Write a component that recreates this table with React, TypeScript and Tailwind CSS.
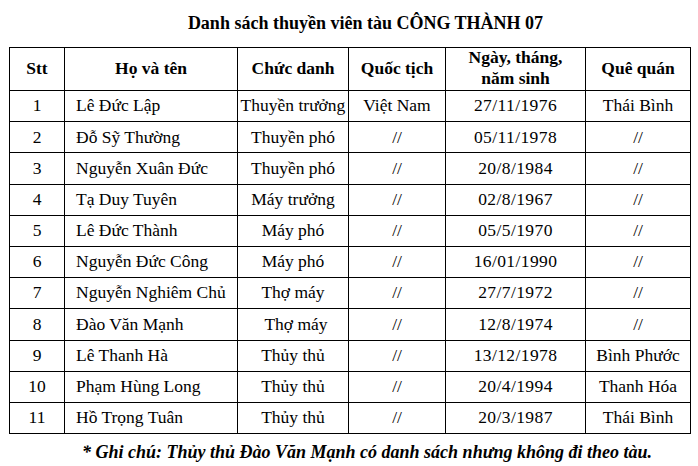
const rows = [
  { stt: 1, name: "Lê Đức Lập", role: "Thuyền trưởng", nation: "Việt Nam", dob: "27/11/1976", home: "Thái Bình" },
  { stt: 2, name: "Đỗ Sỹ Thường", role: "Thuyền phó", nation: "//", dob: "05/11/1978", home: "//" },
  { stt: 3, name: "Nguyễn Xuân Đức", role: "Thuyền phó", nation: "//", dob: "20/8/1984", home: "//" },
  { stt: 4, name: "Tạ Duy Tuyên", role: "Máy trưởng", nation: "//", dob: "02/8/1967", home: "//" },
  { stt: 5, name: "Lê Đức Thành", role: "Máy phó", nation: "//", dob: "05/5/1970", home: "//" },
  { stt: 6, name: "Nguyễn Đức Công", role: "Máy phó", nation: "//", dob: "16/01/1990", home: "//" },
  { stt: 7, name: "Nguyễn Nghiêm Chủ", role: "Thợ máy", nation: "//", dob: "27/7/1972", home: "//" },
  { stt: 8, name: "Đào Văn Mạnh", role: "Thợ máy", nation: "//", dob: "12/8/1974", home: "//", shift: true },
  { stt: 9, name: "Lê Thanh Hà", role: "Thủy thủ", nation: "//", dob: "13/12/1978", home: "Bình Phước" },
  { stt: 10, name: "Phạm Hùng Long", role: "Thủy thủ", nation: "//", dob: "20/4/1994", home: "Thanh Hóa" },
  { stt: 11, name: "Hồ Trọng Tuân", role: "Thủy thủ", nation: "//", dob: "20/3/1987", home: "Thái Bình" },
];

const cell = "border border-black p-0";

export default function App() {
  return (
    <div
      className="w-[698px] h-[466px] bg-white text-black overflow-hidden"
      style={{ fontFamily: '"Liberation Serif", "Times New Roman", serif' }}
    >
      <h1 className="pt-[13px] pl-[33px] h-[47px] text-center text-[18px] font-bold leading-[20px] whitespace-nowrap">
        Danh sách thuyền viên tàu CÔNG THÀNH 07
      </h1>
      <table className="ml-[9px] w-[681px] border-collapse table-fixed leading-none">
        <colgroup>
          <col className="w-[55px]" />
          <col className="w-[173px]" />
          <col className="w-[111px]" />
          <col className="w-[97px]" />
          <col className="w-[140px]" />
          <col className="w-[105px]" />
        </colgroup>
        <thead>
          <tr className="h-[43px] font-bold text-[17.5px]">
            <th className={cell}>Stt</th>
            <th className={cell}>Họ và tên</th>
            <th className={cell}>Chức danh</th>
            <th className={cell}>Quốc tịch</th>
            <th className={cell}>
              <div className="leading-[21px] -mt-[2px]">
                Ngày, tháng,
                <br />
                năm sinh
              </div>
            </th>
            <th className={cell}>Quê quán</th>
          </tr>
        </thead>
        <tbody className="text-[17.5px]">
          {rows.map((r) => (
            <tr key={r.stt} className="h-[31.2px]">
              <td className={`${cell} text-center`}>{r.stt}</td>
              <td className={`${cell} pl-[11px] text-left whitespace-nowrap`}>{r.name}</td>
              <td
                className={`${cell} text-center whitespace-nowrap ${r.shift ? "pl-[6px]" : ""}`}
              >
                {r.role}
              </td>
              <td className={`${cell} text-center whitespace-nowrap`}>{r.nation}</td>
              <td className={`${cell} text-center tracking-[0.4px]`}>{r.dob}</td>
              <td className={`${cell} text-center whitespace-nowrap`}>{r.home}</td>
            </tr>
          ))}
        </tbody>
      </table>
      <p className="mt-[8px] pl-[36px] text-center text-[18px] font-bold italic leading-[20px] whitespace-nowrap">
        * Ghi chú: Thủy thủ Đào Văn Mạnh có danh sách nhưng không đi theo tàu.
      </p>
    </div>
  );
}
